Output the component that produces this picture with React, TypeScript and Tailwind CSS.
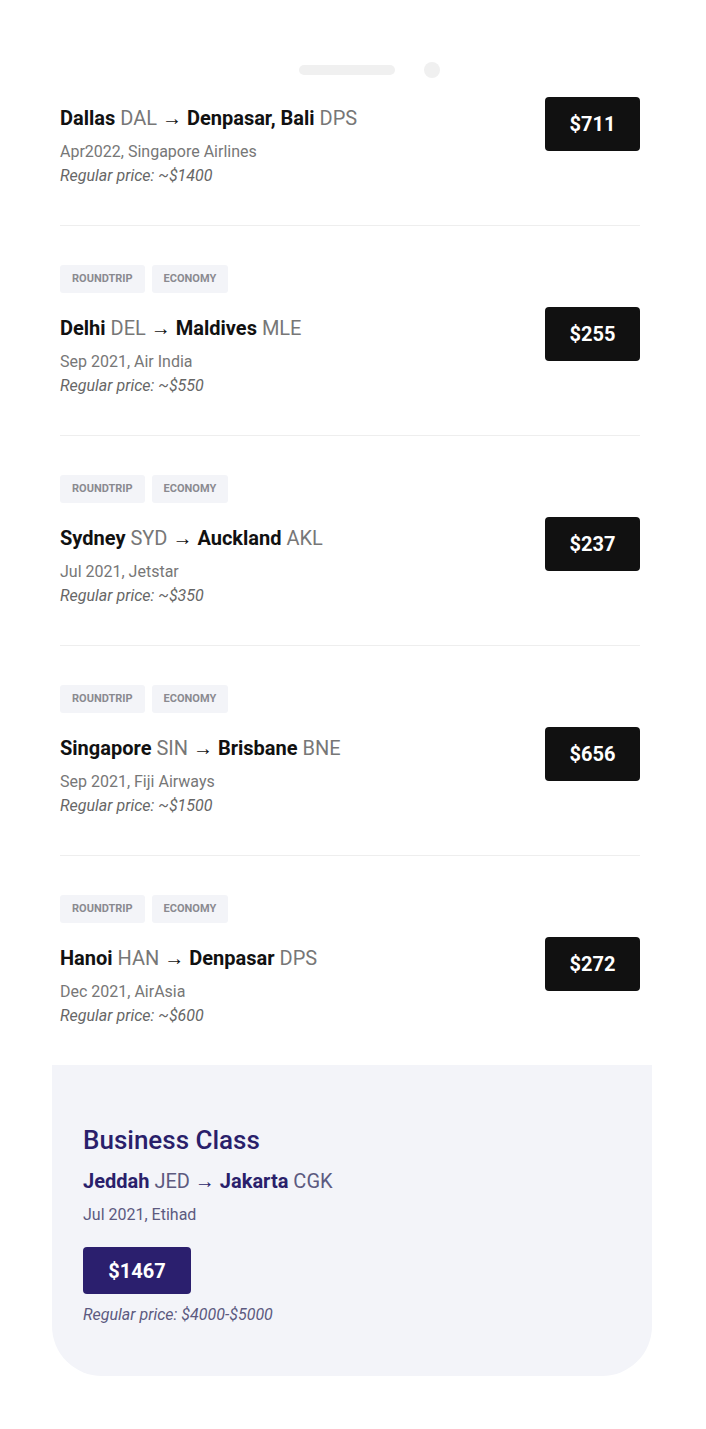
const deals = [
  { from: "Dallas", fromCode: "DAL", to: "Denpasar, Bali", toCode: "DPS", date: "Apr2022, Singapore Airlines", regular: "~$1400", price: "$711", tags: false },
  { from: "Delhi", fromCode: "DEL", to: "Maldives", toCode: "MLE", date: "Sep 2021, Air India", regular: "~$550", price: "$255", tags: true },
  { from: "Sydney", fromCode: "SYD", to: "Auckland", toCode: "AKL", date: "Jul 2021, Jetstar", regular: "~$350", price: "$237", tags: true },
  { from: "Singapore", fromCode: "SIN", to: "Brisbane", toCode: "BNE", date: "Sep 2021, Fiji Airways", regular: "~$1500", price: "$656", tags: true },
  { from: "Hanoi", fromCode: "HAN", to: "Denpasar", toCode: "DPS", date: "Dec 2021, AirAsia", regular: "~$600", price: "$272", tags: true },
];

function Tag({ label }: { label: string }) {
  return (
    <span className="inline-flex h-[28px] items-center rounded-[3px] bg-[#f3f4f8] px-3 text-[11px] font-bold uppercase text-[#8a8a90]">
      {label}
    </span>
  );
}

export default function App() {
  return (
    <div className="min-h-[1429px] bg-white font-['Roboto',sans-serif]">
      <div className="ml-[52px] w-[600px] pt-[62px]">
        <div className="flex items-center justify-center gap-[29px] pl-[34px]">
          <div className="h-[10px] w-[96px] rounded-full bg-[#f0f0f0]" />
          <div className="h-[16px] w-[16px] rounded-full bg-[#f0f0f0]" />
        </div>

        <div className="pl-2 pr-3 pt-[19px]">
          {deals.map((d, i) => (
            <div
              key={i}
              className={`${i < deals.length - 1 ? "border-b border-[#eeeeee]" : ""} ${i > 0 ? "pt-[39px]" : ""} pb-[37px]`}
            >
              {d.tags && (
                <div className="mb-[14px] flex gap-[7px]">
                  <Tag label="Roundtrip" />
                  <Tag label="Economy" />
                </div>
              )}
              <div className="flex items-start justify-between">
                <div className="pt-[7px]">
                  <div className="text-[20px] leading-[28px] text-[#111]">
                    <span className="font-bold">{d.from}</span>{" "}
                    <span className="text-[#777]">{d.fromCode}</span> →{" "}
                    <span className="font-bold">{d.to}</span>{" "}
                    <span className="text-[#777]">{d.toCode}</span>
                  </div>
                  <div className="mt-[8px] text-[16px] leading-[24px] text-[#777]">{d.date}</div>
                  <div className="text-[16px] italic leading-[24px] text-[#666]">Regular price: {d.regular}</div>
                </div>
                <div className="flex h-[54px] w-[95px] items-center justify-center rounded-[4px] bg-[#111] text-[20px] font-bold text-white">
                  {d.price}
                </div>
              </div>
            </div>
          ))}
        </div>

        <div className="rounded-b-[50px] bg-[#f3f4f9] px-[31px] pb-[49px] pt-[57px]">
          <h2 className="text-[26px] font-medium leading-[36px] text-[#2a1f6b]">Business Class</h2>
          <div className="mt-[9px] text-[20px] leading-[28px] text-[#2a1f6b]">
            <span className="font-bold">Jeddah</span> <span className="text-[#5c5a80]">JED</span> →{" "}
            <span className="font-bold">Jakarta</span> <span className="text-[#5c5a80]">CGK</span>
          </div>
          <div className="mt-[8px] text-[16px] leading-[24px] text-[#5c5a80]">Jul 2021, Etihad</div>
          <div className="mt-[20px] flex h-[47px] w-[108px] items-center justify-center rounded-[4px] bg-[#2b1f6e] text-[20px] font-bold text-white">
            $1467
          </div>
          <div className="mt-[9px] text-[16px] italic leading-[24px] text-[#5c5a80]">Regular price: $4000-$5000</div>
        </div>
      </div>
    </div>
  );
}
